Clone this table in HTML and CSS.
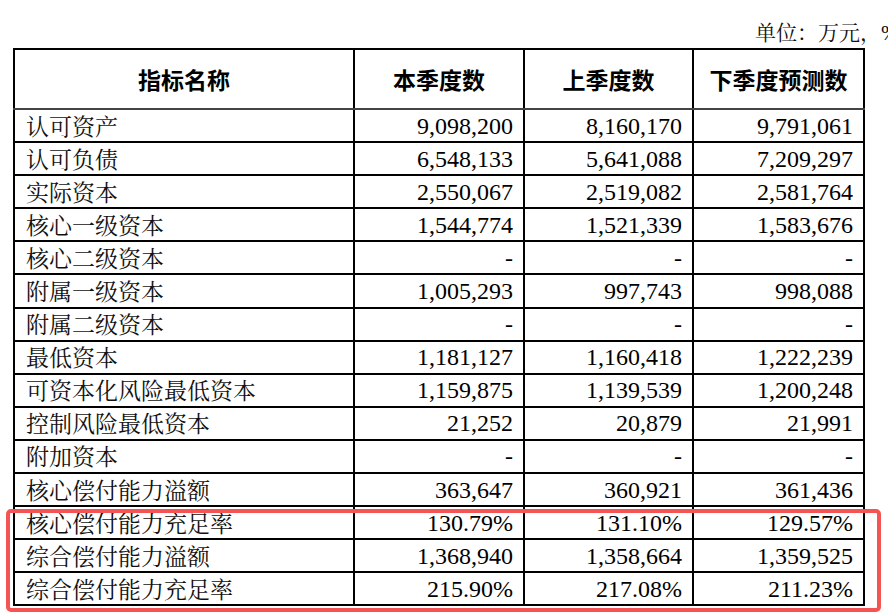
FILE: index.html
```html
<!DOCTYPE html>
<html lang="zh-CN">
<head>
<meta charset="utf-8">
<title>偿付能力指标</title>
<link rel="stylesheet" href="styles.css">
</head>
<body>
<div class="page">
  <div class="unit">单位：万元，%</div>
  <div class="table-wrap">
    <table class="sheet">
      <colgroup>
        <col class="c-name">
        <col class="c-num">
        <col class="c-num2">
        <col class="c-num3">
      </colgroup>
      <thead>
        <tr>
          <th>指标名称</th>
          <th>本季度数</th>
          <th>上季度数</th>
          <th>下季度预测数</th>
        </tr>
      </thead>
      <tbody>
        <tr><td class="name">认可资产</td><td>9,098,200</td><td>8,160,170</td><td>9,791,061</td></tr>
        <tr><td class="name">认可负债</td><td>6,548,133</td><td>5,641,088</td><td>7,209,297</td></tr>
        <tr><td class="name">实际资本</td><td>2,550,067</td><td>2,519,082</td><td>2,581,764</td></tr>
        <tr><td class="name">核心一级资本</td><td>1,544,774</td><td>1,521,339</td><td>1,583,676</td></tr>
        <tr><td class="name">核心二级资本</td><td>-</td><td>-</td><td>-</td></tr>
        <tr><td class="name">附属一级资本</td><td>1,005,293</td><td>997,743</td><td>998,088</td></tr>
        <tr><td class="name">附属二级资本</td><td>-</td><td>-</td><td>-</td></tr>
        <tr><td class="name">最低资本</td><td>1,181,127</td><td>1,160,418</td><td>1,222,239</td></tr>
        <tr><td class="name">可资本化风险最低资本</td><td>1,159,875</td><td>1,139,539</td><td>1,200,248</td></tr>
        <tr><td class="name">控制风险最低资本</td><td>21,252</td><td>20,879</td><td>21,991</td></tr>
        <tr><td class="name">附加资本</td><td>-</td><td>-</td><td>-</td></tr>
        <tr><td class="name">核心偿付能力溢额</td><td>363,647</td><td>360,921</td><td>361,436</td></tr>
        <tr><td class="name">核心偿付能力充足率</td><td>130.79%</td><td>131.10%</td><td>129.57%</td></tr>
        <tr><td class="name">综合偿付能力溢额</td><td>1,368,940</td><td>1,358,664</td><td>1,359,525</td></tr>
        <tr><td class="name">综合偿付能力充足率</td><td>215.90%</td><td>217.08%</td><td>211.23%</td></tr>
      </tbody>
    </table>
    <div class="highlight"></div>
  </div>
</div>
</body>
</html>
```

FILE: styles.css
```css
html, body {
  margin: 0;
  padding: 0;
  background: #ffffff;
  overflow: hidden;
}

body {
  width: 888px;
  height: 615px;
  font-family: "Liberation Serif", "Noto Serif CJK SC", "Noto Sans CJK SC", serif;
  color: #000;
}

.page {
  padding: 20px 0 0 13px;
}

.unit {
  padding-left: 742px;
  height: 26px;
  line-height: 26px;
  font-size: 21px;
  white-space: nowrap;
  margin-bottom: 2px;
  color: #111;
}

.table-wrap {
  position: relative;
  width: 850px;
}

.sheet {
  border-collapse: collapse;
  table-layout: fixed;
  width: 850px;
  border: 2px solid #000;
}

.c-name { width: 340px; }
.c-num { width: 170px; }
.c-num2 { width: 169px; }
.c-num3 { width: 171px; }

.sheet th,
.sheet td {
  border: 2px solid #000;
  padding: 0 10px;
  white-space: nowrap;
  overflow: hidden;
}

.sheet th {
  height: 58px;
  font-family: "Noto Sans CJK SC", sans-serif;
  font-weight: 700;
  font-size: 23px;
  line-height: 28px;
  text-align: center;
  vertical-align: middle;
}

.sheet thead th {
  border-bottom-color: #444;
}

.sheet td {
  height: 31.1px;
  font-size: 24px;
  line-height: 28px;
  text-align: right;
  vertical-align: middle;
}

.sheet td.name {
  text-align: left;
  font-family: "Noto Serif CJK SC", "Noto Sans CJK SC", serif;
  font-weight: 400;
  font-size: 23px;
  padding-left: 11px;
  color: #111;
}

.highlight {
  position: absolute;
  left: -7px;
  top: 461px;
  width: 867px;
  height: 95px;
  border: 4px solid #f45454;
  border-radius: 5px;
  pointer-events: none;
}
```
